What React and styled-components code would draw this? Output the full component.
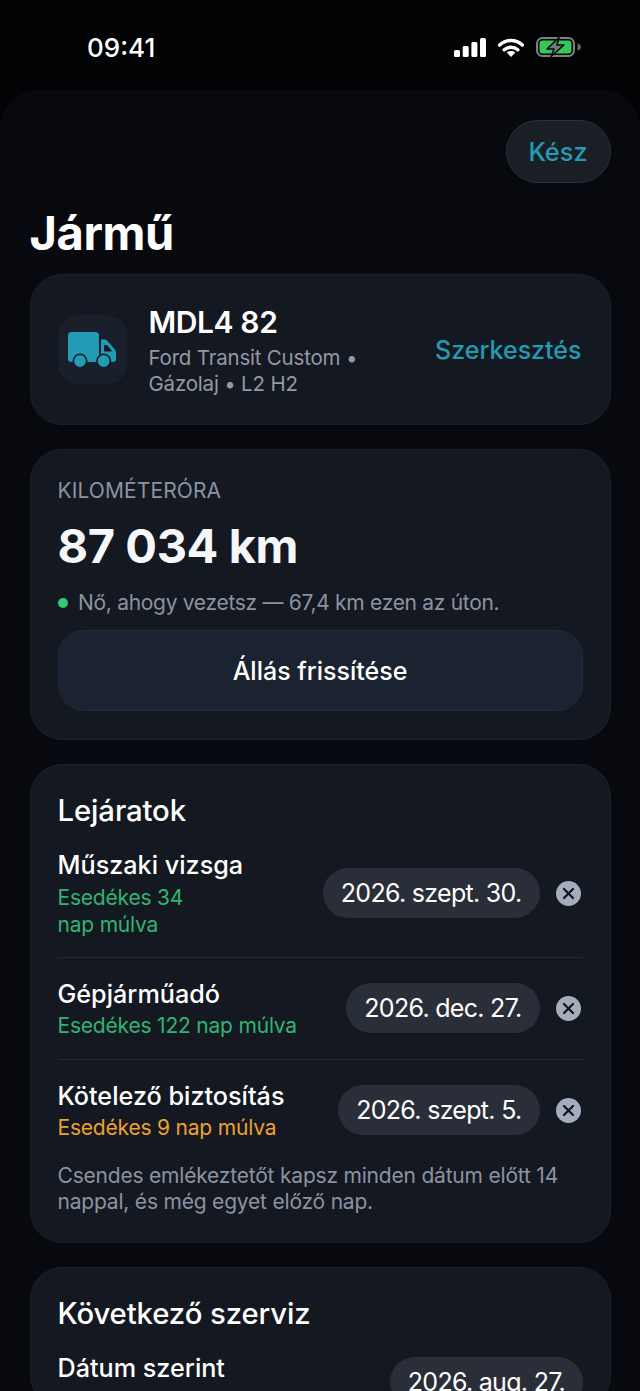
import styled, { createGlobalStyle } from "styled-components";

const GlobalStyle = createGlobalStyle`
  html, body {
    margin: 0;
    padding: 0;
    background: #020305;
  }
  body {
    font-family: Inter, "Noto Sans", sans-serif;
    -webkit-font-smoothing: antialiased;
  }
`;

const deadlines = [
  { name: "Műszaki vizsga", note: "Esedékes 34\nnap múlva", date: "2026. szept. 30.", tone: "#2fb573" },
  { name: "Gépjárműadó", note: "Esedékes 122 nap múlva", date: "2026. dec. 27.", tone: "#2fb573" },
  { name: "Kötelező biztosítás", note: "Esedékes 9 nap múlva", date: "2026. szept. 5.", tone: "#eea02f" },
];

function ClearIcon() {
  return (
    <svg width="25" height="25" viewBox="0 0 25 25">
      <circle cx="12.500" cy="12.500" r="12.500" fill="#a3adbb" />
      <path d="M8 8l9 9M17 8l-9 9" stroke="#10141c" strokeWidth="2.200" strokeLinecap="round" />
    </svg>
  );
}

function TruckIcon() {
  return (
    <svg width="48" height="35" viewBox="0 0 48 35">
      <path d="M3.500 0h24a3.500 3.500 0 0 1 3.500 3.500V30H3.500A3.500 3.500 0 0 1 0 26.500v-23A3.500 3.500 0 0 1 3.500 0z" fill="#229bb5" />
      <path d="M33 7.500h3.500c1 0 1.900.4 2.500 1.100l7.300 8.200c1.100 1.200 1.700 2.700 1.700 4.300V27a3 3 0 0 1-3 3H33z" fill="#229bb5" />
      <path d="M36 13h2.300c.5 0 .9.200 1.200.6l4 4.600c.5.600.1 1.300-.6 1.300H36z" fill="#161b25" />
      <circle cx="12" cy="29" r="6.700" fill="#229bb5" stroke="#161b25" strokeWidth="1.600" />
      <circle cx="35.700" cy="29" r="6.700" fill="#229bb5" stroke="#161b25" strokeWidth="1.600" />
    </svg>
  );
}

function StatusIcons() {
  return (
    <StatusRight>
      <svg width="32" height="19" viewBox="0 0 32 19">
        <rect x="0" y="12" width="6" height="7" rx="1.500" fill="#fff" />
        <rect x="8.700" y="8" width="6" height="11" rx="1.500" fill="#fff" />
        <rect x="17.400" y="4" width="6" height="15" rx="1.500" fill="#fff" />
        <rect x="26" y="0" width="6" height="19" rx="1.500" fill="#fff" />
      </svg>
      <svg width="26" height="19" viewBox="0 0 26 19">
        <path d="M1.700 7C8 1 18 1 24.300 7" fill="none" stroke="#fff" strokeWidth="3.400" strokeLinecap="round" />
        <path d="M6.200 11.800c4-3.500 9.600-3.500 13.600 0" fill="none" stroke="#fff" strokeWidth="3.400" strokeLinecap="round" />
        <path d="M13 19l-4.300-4.600c2.500-1.800 6.100-1.800 8.600 0z" fill="#fff" />
      </svg>
      <svg width="45" height="20" viewBox="0 0 45 20">
        <rect x="1" y="1" width="37" height="18" rx="5.500" fill="none" stroke="#808082" strokeWidth="2" />
        <rect x="3.500" y="3.500" width="32" height="13" rx="3" fill="#35c759" />
        <path d="M41.500 6.500c2 .4 3.500 1.700 3.500 3.500s-1.500 3.100-3.500 3.500z" fill="#68686a" />
        <path d="M23 .5L11 12h7L15 19.500 28 8h-7z" fill="#77777a" stroke="#050608" strokeWidth="1.500" strokeLinejoin="round" />
      </svg>
    </StatusRight>
  );
}

export default function App() {
  return (
    <Page>
      <GlobalStyle />
      <StatusBar>
        <Clock>09:41</Clock>
        <StatusIcons />
      </StatusBar>
      <Sheet>
        <TopRow>
          <DoneButton>Kész</DoneButton>
        </TopRow>
        <PageTitle>Jármű</PageTitle>
        <CardStack>
          <VehicleCard>
            <IconTile>
              <TruckIcon />
            </IconTile>
            <VehicleInfo>
              <Plate>MDL4 82</Plate>
              <VehicleMeta>Ford Transit Custom • Gázolaj • L2 H2</VehicleMeta>
            </VehicleInfo>
            <EditLink>Szerkesztés</EditLink>
          </VehicleCard>

          <OdometerCard>
            <Eyebrow>KILOMÉTERÓRA</Eyebrow>
            <Reading>87 034 km</Reading>
            <LiveRow>
              <LiveDot />
              <LiveText>Nő, ahogy vezetsz — 67,4 km ezen az úton.</LiveText>
            </LiveRow>
            <UpdateButton>Állás frissítése</UpdateButton>
          </OdometerCard>

          <ListCard>
            <CardTitle>Lejáratok</CardTitle>
            {deadlines.map((item, i) => (
              <DeadlineRow key={item.name} $first={i === 0}>
                <DeadlineText>
                  <DeadlineName>{item.name}</DeadlineName>
                  <DeadlineNote $tone={item.tone}>{item.note}</DeadlineNote>
                </DeadlineText>
                <DatePill>{item.date}</DatePill>
                <ClearButton>
                  <ClearIcon />
                </ClearButton>
              </DeadlineRow>
            ))}
            <Hint>Csendes emlékeztetőt kapsz minden dátum előtt 14 nappal, és még egyet előző nap.</Hint>
          </ListCard>

          <ServiceCard>
            <CardTitle>Következő szerviz</CardTitle>
            <ServiceRow>
              <DeadlineName>Dátum szerint</DeadlineName>
              <ServicePill>2026. aug. 27.</ServicePill>
            </ServiceRow>
          </ServiceCard>
        </CardStack>
      </Sheet>
    </Page>
  );
}

const Page = styled.div`
  width: 640px;
  height: 1391px;
  overflow: hidden;
  background: #020305;
`;

const StatusBar = styled.div`
  height: 90px;
  box-sizing: border-box;
  display: flex;
  justify-content: space-between;
  align-items: flex-start;
  padding: 33px 59px 0 87px;
`;

const Clock = styled.div`
  color: #ffffff;
  font-size: 26px;
  font-weight: 500;
  line-height: 30px;
`;

const StatusRight = styled.div`
  display: flex;
  align-items: center;
  gap: 12px;
  margin-top: 4px;
`;

const Sheet = styled.div`
  min-height: 1301px;
  box-sizing: border-box;
  padding: 30px 29.500px 0;
  border-radius: 38px 38px 0 0;
  background: #08090e;
`;

const TopRow = styled.div`
  display: flex;
  justify-content: flex-end;
`;

const DoneButton = styled.div`
  width: 105px;
  height: 63px;
  box-sizing: border-box;
  display: flex;
  align-items: center;
  justify-content: center;
  border-radius: 32px;
  border: 1.500px solid #2c3037;
  background: #1a1e25;
  color: #229bb5;
  font-size: 25.400px;
  font-weight: 500;
`;

const PageTitle = styled.h1`
  margin: 21px 0 0;
  color: #ffffff;
  font-size: 47px;
  font-weight: 700;
  line-height: 58px;
  letter-spacing: -0.4px;
`;

const CardStack = styled.div`
  display: flex;
  flex-direction: column;
  gap: 24px;
  margin-top: 12px;
`;

const Card = styled.section`
  box-sizing: border-box;
  border-radius: 32px;
  border: 1.500px solid #1c2029;
  background: #141820;
`;

const VehicleCard = styled(Card)`
  height: 151px;
  display: flex;
  align-items: center;
  padding: 0 28px 0 27px;
`;

const IconTile = styled.div`
  width: 69px;
  height: 69px;
  flex: none;
  display: flex;
  align-items: center;
  justify-content: center;
  border-radius: 20px;
  background: #1a202b;
`;

const VehicleInfo = styled.div`
  width: 230px;
  margin-left: 22px;
  padding-top: 2px;
`;

const Plate = styled.div`
  color: #ffffff;
  font-size: 30px;
  font-weight: 600;
  line-height: 36px;
  letter-spacing: -0.4px;
`;

const VehicleMeta = styled.div`
  margin-top: 5px;
  color: #9299a5;
  font-size: 20.500px;
  line-height: 26.500px;
  letter-spacing: -0.2px;
`;

const EditLink = styled.div`
  margin-left: auto;
  color: #229bb5;
  font-size: 25px;
  font-weight: 500;
`;

const OdometerCard = styled(Card)`
  height: 291px;
  padding: 28px 27px 0;
`;

const Eyebrow = styled.div`
  color: #8c93a0;
  font-size: 21px;
  line-height: 26px;
  letter-spacing: 0.1px;
`;

const Reading = styled.div`
  margin-top: 13px;
  color: #f5f7fb;
  font-size: 47px;
  font-weight: 700;
  line-height: 58px;
  letter-spacing: -0.4px;
`;

const LiveRow = styled.div`
  display: flex;
  align-items: center;
  gap: 10px;
  margin-top: 15px;
`;

const LiveDot = styled.span`
  width: 10.500px;
  height: 10.500px;
  border-radius: 50%;
  background: #2ecc71;
`;

const LiveText = styled.span`
  color: #8c93a0;
  font-size: 21px;
  line-height: 26px;
  letter-spacing: -0.3px;
`;

const UpdateButton = styled.div`
  height: 81px;
  box-sizing: border-box;
  display: flex;
  align-items: center;
  justify-content: center;
  margin-top: 14px;
  border-radius: 26px;
  border: 1.500px solid #232a36;
  background: #1b2230;
  color: #ffffff;
  font-size: 25px;
  font-weight: 500;
`;

const ListCard = styled(Card)`
  height: 479px;
  padding: 28px 27px 0;
`;

const CardTitle = styled.h2`
  margin: 0;
  color: #ffffff;
  font-size: 29.300px;
  font-weight: 500;
  line-height: 36px;
  letter-spacing: -0.1px;
`;

const DeadlineRow = styled.div`
  display: flex;
  align-items: center;
  gap: 16.500px;
  padding: ${(p) => (p.$first ? "20px 0 19.500px" : "19.500px 0 20px")};
  border-top: ${(p) => (p.$first ? "none" : "1.500px solid #242933")};
`;

const DeadlineText = styled.div`
  flex: 1;
  min-width: 0;
`;

const DeadlineName = styled.div`
  color: #ffffff;
  font-size: 25.200px;
  font-weight: 500;
  line-height: 32px;
`;

const DeadlineNote = styled.div`
  margin-top: 2.500px;
  color: ${(p) => p.$tone};
  font-size: 21px;
  line-height: 27px;
  letter-spacing: -0.2px;
  white-space: pre-line;
`;

const DatePill = styled.div`
  height: 50px;
  flex: none;
  display: flex;
  align-items: center;
  padding: 0 18px;
  border-radius: 25px;
  background: #2a2e38;
  color: #ffffff;
  font-size: 25px;
  letter-spacing: -0.7px;
`;

const ClearButton = styled.div`
  flex: none;
  display: flex;
  margin-right: 1.500px;
`;

const Hint = styled.p`
  margin: 1.500px 0 0;
  color: #8c93a0;
  font-size: 21px;
  line-height: 26px;
  letter-spacing: -0.2px;
`;

const ServiceCard = styled(Card)`
  padding: 28px 27px 0;
`;

const ServiceRow = styled.div`
  display: flex;
  justify-content: space-between;
  align-items: flex-start;
  margin-top: 20px;
`;

const ServicePill = styled(DatePill)`
  margin-top: 5px;
  padding: 0 17.500px;
`;
